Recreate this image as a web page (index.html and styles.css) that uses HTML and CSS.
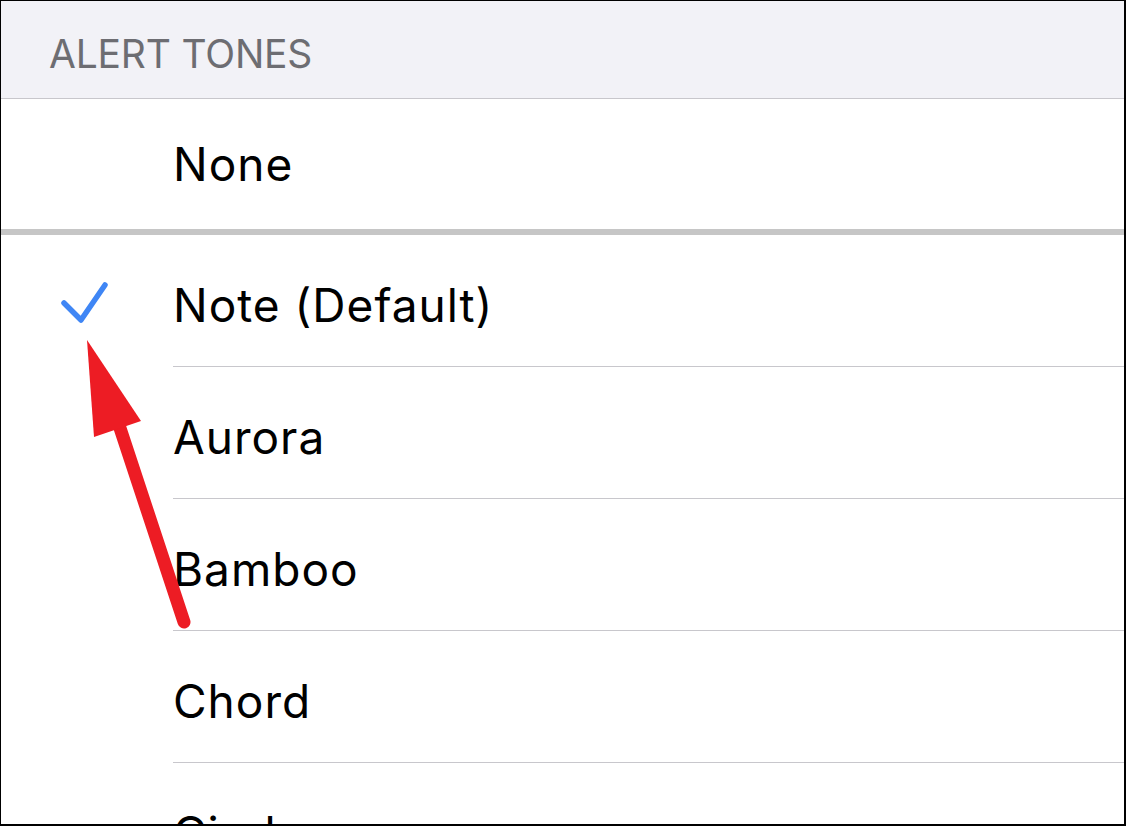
FILE: index.html
```html
<!DOCTYPE html>
<html>
<head>
<meta charset="utf-8">
<link rel="stylesheet" href="styles.css">
</head>
<body>
<div class="screen">
  <div class="section-header">ALERT TONES</div>
  <div class="row row-none">
    <div class="check-cell"></div>
    <div class="label">None</div>
  </div>
  <div class="thick-sep"></div>
  <div class="row">
    <div class="check-cell">
      <svg class="check" width="60" height="50" viewBox="0 0 60 50">
        <polyline points="4,21 21,38 45,3" fill="none" stroke="#3f86f5" stroke-width="5.5" stroke-linecap="round" stroke-linejoin="round"/>
      </svg>
    </div>
    <div class="label">Note (Default)</div>
  </div>
  <div class="row">
    <div class="check-cell"></div>
    <div class="label">Aurora</div>
  </div>
  <div class="row">
    <div class="check-cell"></div>
    <div class="label">Bamboo</div>
  </div>
  <div class="row">
    <div class="check-cell"></div>
    <div class="label">Chord</div>
  </div>
  <div class="row">
    <div class="check-cell"></div>
    <div class="label">Circles</div>
  </div>
  <svg class="arrow" width="1126" height="826" viewBox="0 0 1126 826">
    <line x1="184" y1="622" x2="119" y2="425" stroke="#ed1c24" stroke-width="13" stroke-linecap="round"/>
    <polygon points="87,340 141,421 94,437" fill="#ed1c24"/>
  </svg>
</div>
</body>
</html>
```
FILE: styles.css
```css
html, body {
  margin: 0;
  padding: 0;
  background: #fff;
}
.screen {
  position: relative;
  width: 1126px;
  height: 826px;
  box-sizing: border-box;
  border-style: solid;
  border-color: #000;
  border-width: 1px 2px 2px 1px;
  overflow: hidden;
  font-family: Inter, "Liberation Sans", sans-serif;
  background: #fff;
}
.section-header {
  height: 97px;
  box-sizing: border-box;
  background: #f2f2f7;
  border-bottom: 1px solid #c8c7cc;
  box-sizing: content-box;
  padding-left: 48px;
  display: flex;
  align-items: center;
  font-size: 39px;
  color: #6d6d72;
  letter-spacing: -0.2px;
}
.section-header {
  height: 90px;
  padding-top: 7px;
}
.row {
  display: flex;
  height: 132px;
}
.row-none {
  height: 130px;
}
.row-none .label {
  border-bottom: none;
  padding-top: 0;
}
.check-cell {
  width: 172px;
  flex: none;
  position: relative;
}
.check {
  position: absolute;
  left: 59px;
  top: 47px;
}
.label {
  flex: 1;
  border-bottom: 1px solid #c8c7cc;
  display: flex;
  align-items: center;
  padding-left: 0;
  padding-top: 8px;
  font-size: 46px;
  color: #000;
  letter-spacing: 1px;
}
.thick-sep {
  height: 6px;
  background: #c6c6c6;
}
.arrow {
  position: absolute;
  left: -1px;
  top: -1px;
  pointer-events: none;
}
```
